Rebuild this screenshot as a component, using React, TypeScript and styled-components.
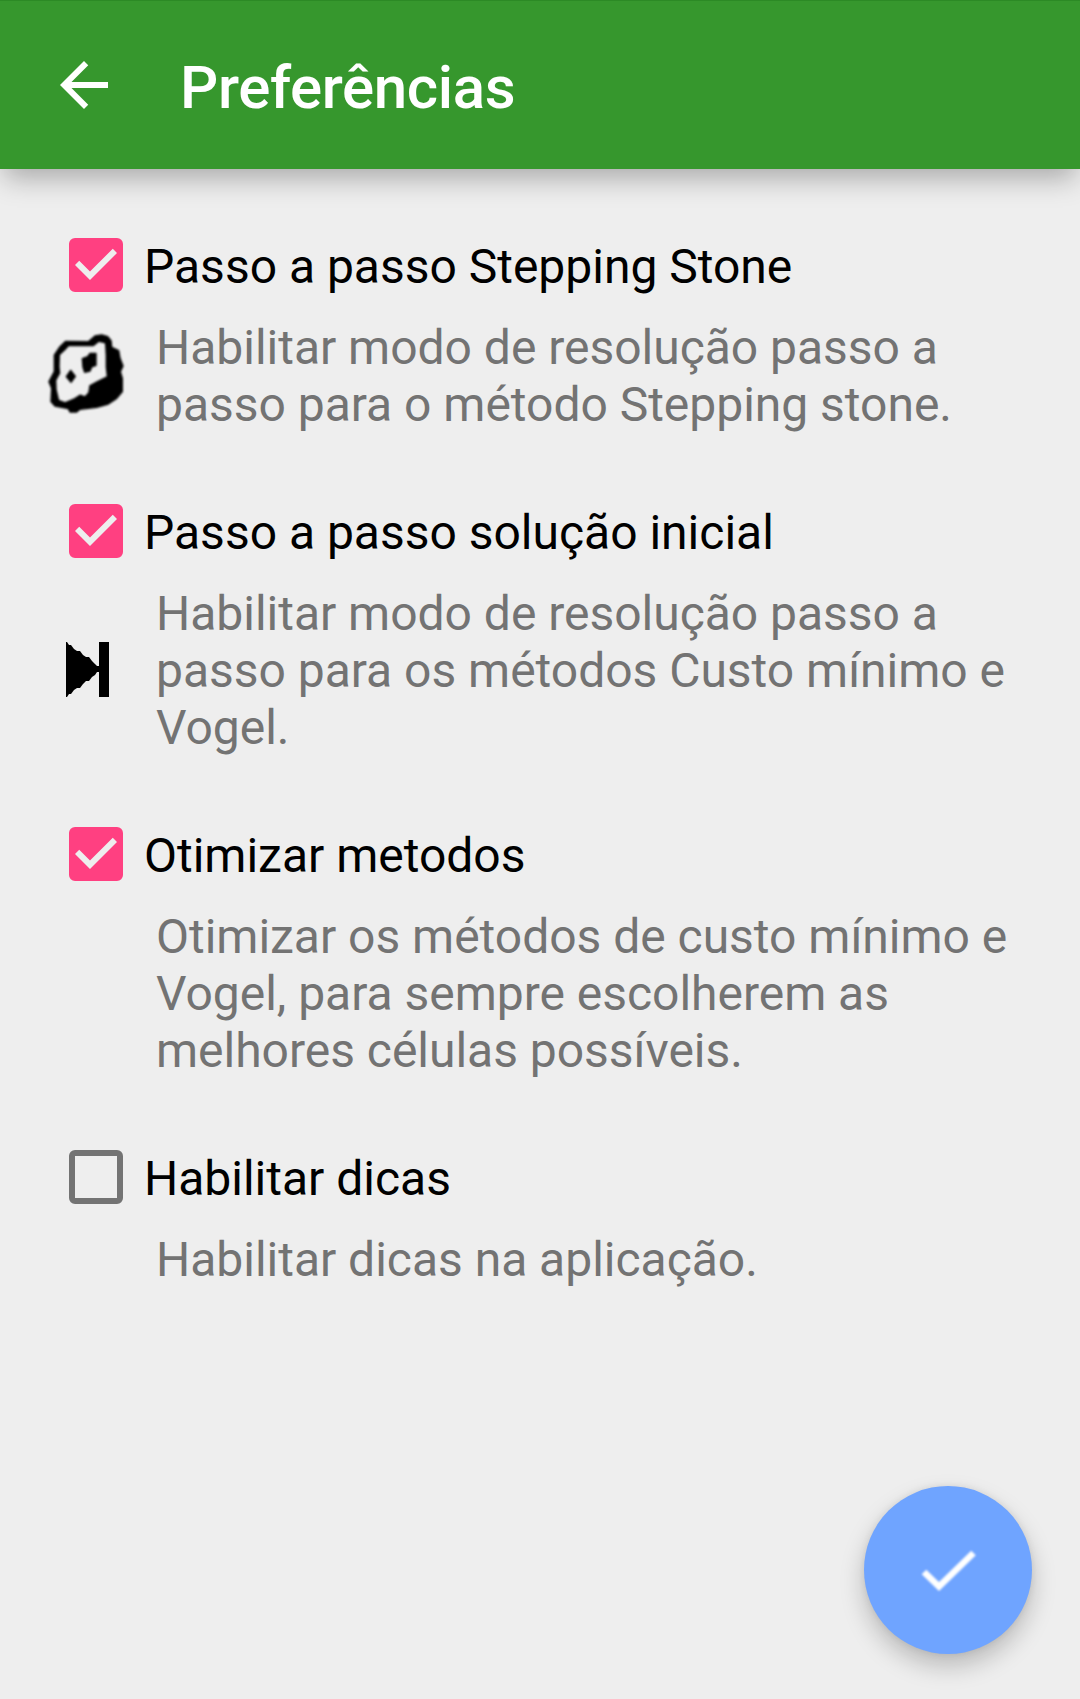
import React, { useState } from "react";
import styled, { createGlobalStyle } from "styled-components";

const GlobalStyle = createGlobalStyle`
  * { box-sizing: border-box; }
  body { margin: 0; background: #eeeeee; font-family: Roboto, "Noto Sans", sans-serif; }
`;

const Screen = styled.div`
  display: flex;
  flex-direction: column;
  position: relative;
  width: 1080px;
  height: 1699px;
  overflow: hidden;
  background: #eeeeee;
`;

const AppBar = styled.header`
  display: flex;
  align-items: center;
  flex: none;
  height: 169px;
  padding: 0 48px;
  background: #36972d;
  border-top: 1px solid #2c8a25;
  box-shadow: 0 13px 26px -4px rgba(0, 0, 0, 0.29);
`;

const BackButton = styled.button`
  display: flex;
  flex: none;
  width: 72px;
  height: 72px;
  padding: 0;
  border: 0;
  background: none;
`;

const Title = styled.h1`
  margin: 6px 0 0 60px;
  color: #ffffff;
  font-size: 60px;
  font-weight: 500;
  letter-spacing: -0.38px;
  line-height: 70px;
`;

const PreferenceList = styled.main`
  display: flex;
  flex-direction: column;
  gap: 71px;
  padding: 69px 48px 0 39px;
`;

const Preference = styled.section`
  display: flex;
  flex-direction: column;
  gap: 27px;
`;

const PreferenceHeader = styled.label`
  display: flex;
  height: 54px;
  padding-left: 30px;
  gap: 21px;
`;

const HiddenInput = styled.input`
  appearance: none;
  display: none;
`;

const Box = styled.span<{ $checked: boolean }>`
  display: flex;
  flex: none;
  width: 54px;
  height: 54px;
  border: 6px solid ${(p) => (p.$checked ? "#ff4081" : "#737373")};
  border-radius: 6px;
  background: ${(p) => (p.$checked ? "#ff4081" : "transparent")};
`;

const Name = styled.span`
  color: #000000;
  font-size: 48px;
  letter-spacing: -0.01px;
  line-height: 57px;
  white-space: nowrap;
`;

const Details = styled.div`
  display: flex;
  align-items: center;
  gap: 21px;
`;

const IconSlot = styled.div`
  display: flex;
  flex: none;
  width: 96px;
`;

const Summary = styled.p`
  flex: 1;
  margin: 0;
  color: #737373;
  font-size: 48px;
  letter-spacing: -0.02px;
  line-height: 57px;
`;

const ConfirmButton = styled.button`
  position: absolute;
  right: 48px;
  bottom: 45px;
  display: flex;
  align-items: center;
  justify-content: center;
  width: 168px;
  height: 168px;
  padding: 0;
  border: 0;
  border-radius: 50%;
  background: #6fa4ff;
  box-shadow: 0 12px 24px rgba(0, 0, 0, 0.22), 0 0 7px rgba(0, 0, 0, 0.08);
`;

const SoftIcon = styled.svg`
  filter: blur(0.8px);
`;

const BackArrow = () => (
  <svg width="72" height="72" viewBox="0 0 24 24">
    <path d="M20 11H7.83l5.59-5.59L12 4l-8 8 8 8 1.41-1.41L7.83 13H20v-2z" fill="#fff" />
  </svg>
);

const BoxCheck = () => (
  <svg width="42" height="42" viewBox="5 5 14 14">
    <path d="M10 17l-5-5 1.41-1.41L10 14.17l7.59-7.59L19 8l-9 9z" fill="#eeeeee" />
  </svg>
);

const StoneIcon = () => (
  <SoftIcon width="96" height="96" viewBox="-18 -6 288 288">
    <g strokeLinejoin="round" strokeWidth="4">
      <path
        d="M62 34L130 35L150 18L170 15L188 20L198 32L200 52L221 62L225 85L234 108L226 125L232 145L232 185L215 205L190 222L155 232L105 238L95 246L75 246L70 236L30 228L18 215L20 175L12 155L28 125L28 75L45 50Z"
        fill="#000"
        stroke="#000"
      />
      <path
        d="M72 51L146 51L162 38L178 42L180 75L180 112L183 138L150 154L131 165L128 186L119 196L105 191L85 204L60 214L44 208L37 178L36 152L48 130L46 110L47 76L60 64Z"
        fill="#eeeeee"
        stroke="#eeeeee"
      />
      <path d="M112 86L128 80L135 70L153 70L153 106L140 111L135 123L119 127L114 112Z" fill="#000" stroke="#000" />
      <path d="M77 121L91 139L78 157L64 140Z" fill="#000" stroke="#000" />
    </g>
  </SoftIcon>
);

const SkipIcon = () => (
  <svg width="96" height="96" viewBox="0 0 96 96">
    <path
      d="M27 19H28L30 22H32L35 26L38 28H41L44 32L47 34H50L53 38L56 41L58 43H60V19H70V74H60V49H58L56 52L53 54L50 58H47L44 61L41 65H38L35 67L32 71H30L28 74H27Z"
      fill="#000"
    />
  </svg>
);

const ConfirmIcon = () => (
  <SoftIcon width="72" height="72" viewBox="0 0 72 72">
    <path d="M12 38L27 52.5L61.5 19" fill="none" stroke="#fff" strokeWidth="6.6" />
  </SoftIcon>
);

const preferences = [
  {
    name: "Passo a passo Stepping Stone",
    summary: "Habilitar modo de resolução passo a passo para o método Stepping stone.",
    icon: <StoneIcon />,
    enabled: true,
  },
  {
    name: "Passo a passo solução inicial",
    summary: "Habilitar modo de resolução passo a passo para os métodos Custo mínimo e Vogel.",
    icon: <SkipIcon />,
    enabled: true,
  },
  {
    name: "Otimizar metodos",
    summary:
      "Otimizar os métodos de custo mínimo e Vogel, para sempre escolherem as melhores células possíveis.",
    icon: null,
    enabled: true,
  },
  {
    name: "Habilitar dicas",
    summary: "Habilitar dicas na aplicação.",
    icon: null,
    enabled: false,
  },
];

export default function App() {
  const [enabled, setEnabled] = useState(preferences.map((p) => p.enabled));
  const toggle = (index: number) =>
    setEnabled((current) => current.map((value, i) => (i === index ? !value : value)));

  return (
    <>
      <GlobalStyle />
      <Screen>
        <AppBar>
          <BackButton>
            <BackArrow />
          </BackButton>
          <Title>Preferências</Title>
        </AppBar>
        <PreferenceList>
          {preferences.map((p, i) => (
            <Preference key={p.name}>
              <PreferenceHeader>
                <HiddenInput type="checkbox" checked={enabled[i]} onChange={() => toggle(i)} />
                <Box $checked={enabled[i]}>{enabled[i] && <BoxCheck />}</Box>
                <Name>{p.name}</Name>
              </PreferenceHeader>
              <Details>
                <IconSlot>{p.icon}</IconSlot>
                <Summary>{p.summary}</Summary>
              </Details>
            </Preference>
          ))}
        </PreferenceList>
        <ConfirmButton>
          <ConfirmIcon />
        </ConfirmButton>
      </Screen>
    </>
  );
}
